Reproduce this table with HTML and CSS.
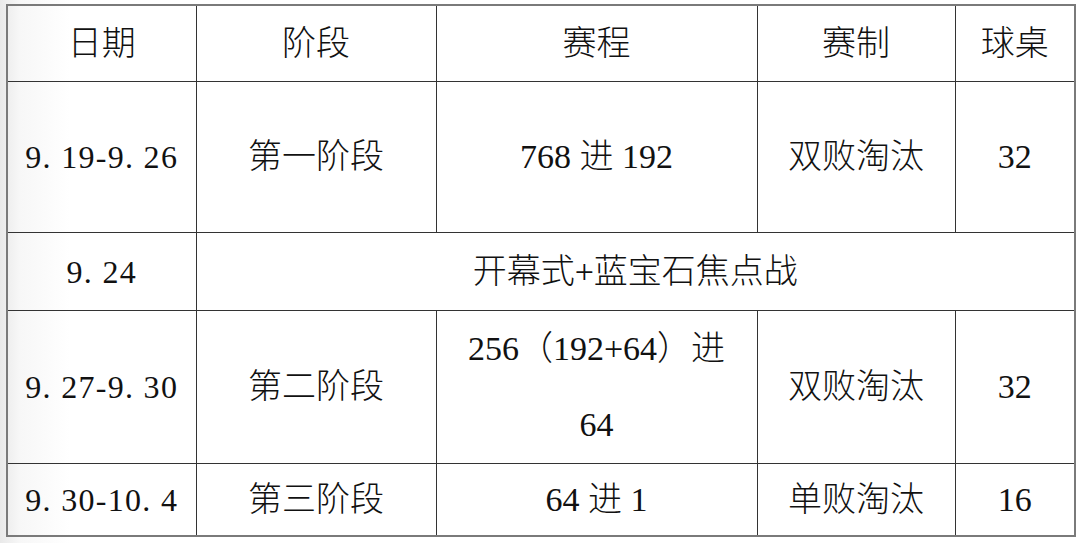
FILE: index.html
```html
<!DOCTYPE html>
<html lang="zh">
<head>
<meta charset="utf-8">
<link rel="stylesheet" href="styles.css">
</head>
<body>
<table class="schedule">
  <colgroup>
    <col class="c-date"><col class="c-stage"><col class="c-match"><col class="c-format"><col class="c-table">
  </colgroup>
  <tr class="r-head">
    <td>日期</td><td>阶段</td><td>赛程</td><td>赛制</td><td>球桌</td>
  </tr>
  <tr class="r-tall">
    <td class="date">9. 19-9. 26</td><td>第一阶段</td><td>768 进 192</td><td>双败淘汰</td><td>32</td>
  </tr>
  <tr class="r-mid">
    <td class="date">9. 24</td><td colspan="4">开幕式+蓝宝石焦点战</td>
  </tr>
  <tr class="r-tall2">
    <td class="date">9. 27-9. 30</td><td>第二阶段</td><td class="two">256（192+64）进<br>64</td><td>双败淘汰</td><td>32</td>
  </tr>
  <tr class="r-last">
    <td class="date">9. 30-10. 4</td><td>第三阶段</td><td>64 进 1</td><td>单败淘汰</td><td>16</td>
  </tr>
</table>
</body>
</html>
```
FILE: styles.css
```css
html, body {
  margin: 0;
  padding: 0;
}
body {
  width: 1080px;
  height: 543px;
  background: linear-gradient(to right, #e9e9e9 0, #f7f7f7 20px, #ffffff 70px);
  padding: 4px 0 0 6px;
  box-sizing: border-box;
  font-family: "Liberation Serif", "Noto Sans CJK SC", serif;
  font-weight: 300;
  color: #111;
}
.schedule {
  border-collapse: collapse;
  table-layout: fixed;
  width: 1068px;
  border: 2px solid #7a7a7a;
  background: transparent;
}
.c-date { width: 189px; }
.c-stage { width: 240px; }
.c-match { width: 321px; }
.c-format { width: 198px; }
.c-table { width: 120px; }
.schedule td {
  border: 1px solid #333;
  text-align: center;
  vertical-align: middle;
  padding: 0;
  font-size: 34px;
  line-height: 38px;
  white-space: nowrap;
}
.r-head td { height: 75px; }
.r-tall td { height: 150px; }
.r-mid td { height: 77px; }
.r-tall2 td { height: 152px; }
.r-last td { height: 71px; }
.schedule td.date {
  font-size: 32px;
  letter-spacing: 1.3px;
}
.schedule td.two {
  line-height: 76px;
}
```
